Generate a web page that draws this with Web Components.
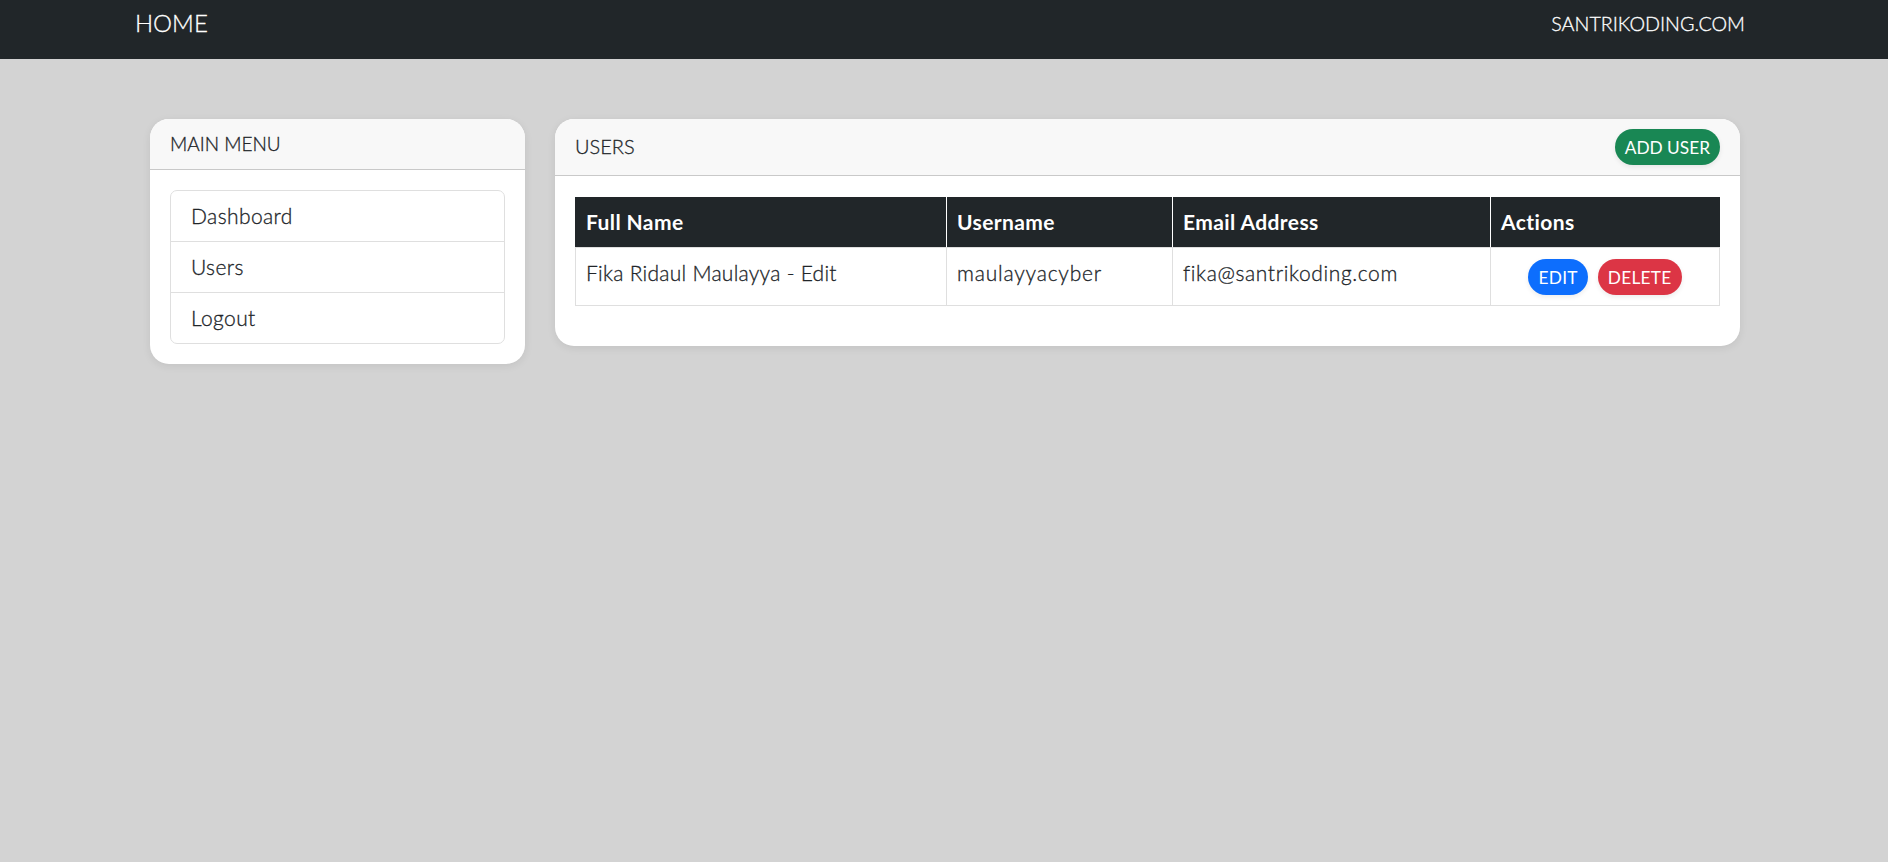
<!DOCTYPE html>
<html>
<head>
<meta charset="utf-8">
<title>Users</title>
<style>
  html, body { margin: 0; height: 100%; }
  body {
    background: lightgray;
    color: #212529;
    font-family: "Lato", "Noto Sans", sans-serif;
    font-size: 20px;
  }
</style>
</head>
<body>
<app-navbar>
  <span slot="brand">HOME</span>
  <span slot="link">SANTRIKODING.COM</span>
</app-navbar>

<app-layout>
  <app-card slot="side" head-height="51">
    <span slot="title" style="font-size: 19px">MAIN MENU</span>
    <menu-list></menu-list>
  </app-card>
  <app-card slot="main" head-height="57">
    <span slot="title">USERS</span>
    <pill-button slot="action" color="#198754">ADD USER</pill-button>
    <users-table></users-table>
  </app-card>
</app-layout>

<script>
class AppNavbar extends HTMLElement {
  constructor() {
    super();
    this.attachShadow({ mode: "open" }).innerHTML = `
      <style>
        :host {
          display: flex;
          justify-content: space-between;
          box-sizing: border-box;
          height: 59px;
          padding: 8px 143px 0 135px;
          background: #212629;
          color: #fff;
          font-weight: 300;
          -webkit-text-stroke: .3px;
        }
        .brand { font-size: 24px; line-height: 30px; }
        .link { font-size: 19.7px; line-height: 32px; }
      </style>
      <div class="brand"><slot name="brand"></slot></div>
      <div class="link"><slot name="link"></slot></div>
    `;
  }
}

class AppLayout extends HTMLElement {
  constructor() {
    super();
    this.attachShadow({ mode: "open" }).innerHTML = `
      <style>
        :host {
          display: grid;
          grid-template-columns: 375px 1185px;
          column-gap: 30px;
          align-items: start;
          padding: 60px 0 0 150px;
        }
      </style>
      <slot name="side"></slot>
      <slot name="main"></slot>
    `;
  }
}

class AppCard extends HTMLElement {
  constructor() {
    super();
    this.attachShadow({ mode: "open" }).innerHTML = `
      <style>
        :host {
          display: block;
          background: #fff;
          border-radius: 19px;
          box-shadow: 0 2px 8px rgba(0, 0, 0, .08);
          overflow: hidden;
        }
        header {
          display: flex;
          align-items: center;
          justify-content: space-between;
          box-sizing: border-box;
          padding: 0 20px 2px;
          background: #f8f8f8;
          border-bottom: 1px solid #c9c9c9;
          font-size: 20px;
          font-weight: 300;
          -webkit-text-stroke: .3px;
        }
        main { padding: 20px; }
        ::slotted([slot="action"]) { margin-top: 2px; }
      </style>
      <header><slot name="title"></slot><slot name="action"></slot></header>
      <main><slot></slot></main>
    `;
  }
  connectedCallback() {
    this.shadowRoot.querySelector("header").style.height = this.getAttribute("head-height") + "px";
  }
}

class PillButton extends HTMLElement {
  constructor() {
    super();
    this.attachShadow({ mode: "open" }).innerHTML = `
      <style>
        :host {
          display: inline-block;
          padding: 0 10px;
          height: 36px;
          line-height: 37px;
          border-radius: 18px;
          color: #fff;
          font-size: 17.3px;
          font-weight: 400;
          -webkit-text-stroke: 0;
          box-shadow: 0 2px 5px rgba(0, 0, 0, .08);
        }
      </style>
      <slot></slot>
    `;
  }
  connectedCallback() {
    this.style.background = this.getAttribute("color");
  }
}

class MenuList extends HTMLElement {
  constructor() {
    super();
    this.attachShadow({ mode: "open" }).innerHTML = `
      <style>
        :host {
          display: block;
          border: 1px solid #dfdfdf;
          border-radius: 7px;
        }
        a {
          display: block;
          box-sizing: border-box;
          height: 51px;
          line-height: 49px;
          padding-left: 20px;
          color: #212529;
          font-size: 21px;
          font-weight: 300;
          -webkit-text-stroke: .3px;
          letter-spacing: .4px;
          text-decoration: none;
          border-bottom: 1px solid #dfdfdf;
        }
        a:last-child { border-bottom: 0; height: 50px; }
      </style>
      <a href="#">Dashboard</a>
      <a href="#">Users</a>
      <a href="#">Logout</a>
    `;
  }
}

class UsersTable extends HTMLElement {
  constructor() {
    super();
    this.attachShadow({ mode: "open" }).innerHTML = `
      <style>
        :host { display: block; padding: 1px 0 20px; }
        table {
          width: 100%;
          table-layout: fixed;
          border-collapse: collapse;
          font-size: 21px;
        }
        th, td {
          box-sizing: border-box;
          border: 1px solid #dfdfdf;
          padding: 0 10px;
          text-align: left;
        }
        th {
          height: 50px;
          padding-bottom: 2px;
          background: #212629;
          color: #fff;
          font-weight: 700;
          letter-spacing: .4px;
          border-color: #212629 #fff #dfdfdf;
        }
        th:first-child { border-left-color: #212629; }
        th:last-child { border-right-color: #212629; }
        td {
          height: 58px;
          padding-bottom: 8px;
          vertical-align: middle;
          font-weight: 300;
          -webkit-text-stroke: .3px;
          letter-spacing: .27px;
        }
        td:nth-child(2) { letter-spacing: .8px; }
        td:nth-child(3) { letter-spacing: .62px; }
        td.actions { padding-bottom: 0; }
        .buttons { display: flex; justify-content: center; gap: 10px; }
      </style>
      <table>
        <colgroup>
          <col style="width: 371px"><col style="width: 226px"><col style="width: 318px"><col>
        </colgroup>
        <thead>
          <tr><th>Full Name</th><th>Username</th><th>Email Address</th><th>Actions</th></tr>
        </thead>
        <tbody>
          <tr>
            <td>Fika Ridaul Maulayya - Edit</td>
            <td>maulayyacyber</td>
            <td>fika@santrikoding.com</td>
            <td class="actions">
              <div class="buttons">
                <pill-button color="#0d6efd">EDIT</pill-button>
                <pill-button color="#dc3545">DELETE</pill-button>
              </div>
            </td>
          </tr>
        </tbody>
      </table>
    `;
  }
}

customElements.define("pill-button", PillButton);
customElements.define("app-navbar", AppNavbar);
customElements.define("app-layout", AppLayout);
customElements.define("app-card", AppCard);
customElements.define("menu-list", MenuList);
customElements.define("users-table", UsersTable);
</script>
</body>
</html>
